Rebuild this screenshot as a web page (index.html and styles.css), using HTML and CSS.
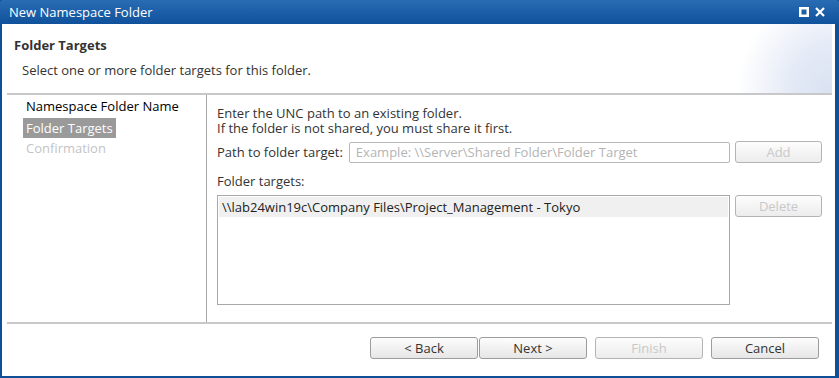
FILE: index.html
```html
<!DOCTYPE html>
<html lang="en">

<head>
    <meta charset="UTF-8">
    <title>New Namespace Folder</title>
    <link rel="stylesheet" href="styles.css">
</head>

<body>
    <div class="window">
        <div class="titlebar">
            <span class="title">New Namespace Folder</span>
            <div class="controls">
                <svg width="10" height="10" viewBox="0 0 10 10">
                    <rect x="1.25" y="1.25" width="7.5" height="7.5" fill="none" stroke="#fff" stroke-width="2.5" />
                </svg>
                <svg width="10" height="10" viewBox="0 0 10 10">
                    <path d="M1 1 L9 9 M9 1 L1 9" stroke="#fff" stroke-width="2.2" />
                </svg>
            </div>
        </div>

        <div class="dialog">
            <div class="header">
                <h1>Folder Targets</h1>
                <p>Select one or more folder targets for this folder.</p>
            </div>

            <div class="main">
                <ul class="steps">
                    <li>Namespace Folder Name</li>
                    <li class="current"><span>Folder Targets</span></li>
                    <li class="pending">Confirmation</li>
                </ul>

                <div class="content">
                    <p class="intro">Enter the UNC path to an existing folder.</p>
                    <p class="intro">If the folder is not shared, you must share it first.</p>

                    <div class="row first">
                        <label for="target">Path to folder target:</label>
                        <input id="target" type="text" placeholder="Example: \\Server\Shared Folder\Folder Target">
                        <button class="btn side" disabled>Add</button>
                    </div>

                    <div class="list-label">Folder targets:</div>
                    <div class="row top">
                        <div class="listbox">
                            <div class="item">\\lab24win19c\Company Files\Project_Management - Tokyo</div>
                        </div>
                        <button class="btn side" disabled>Delete</button>
                    </div>
                </div>
            </div>

            <div class="footer">
                <div class="pair">
                    <button class="btn wide">&lt; Back</button>
                    <button class="btn wide">Next &gt;</button>
                </div>
                <button class="btn wide" disabled>Finish</button>
                <button class="btn wide">Cancel</button>
            </div>
        </div>
    </div>
</body>

</html>
```

FILE: styles.css
```css
* {
    box-sizing: border-box;
}

body {
    margin: 0;
    font-family: 'Open Sans', 'Noto Sans', sans-serif;
    font-size: 13px;
    color: #333;
}

.window {
    width: 839px;
    height: 378px;
    display: flex;
    flex-direction: column;
    background: #0f4f97;
    padding: 0 4px 2px 2px;
}

.titlebar {
    height: 24px;
    flex: none;
    display: flex;
    align-items: center;
    justify-content: space-between;
    background: linear-gradient(#2a6cb4, #0f519b);
    color: #fff;
    margin: 0 -4px 0 -2px;
    padding: 0 14px 0 9px;
    border-radius: 3px 3px 0 0;
}

.title {
    font-size: 13px;
}

.controls {
    display: flex;
    gap: 6px;
}

.dialog {
    flex: 1;
    display: flex;
    flex-direction: column;
    background: #fff;
    padding: 0 3px 0 5px;
}

.header {
    height: 71px;
    padding: 12px 0 0 7px;
    background: radial-gradient(ellipse 95px 105px at 100% 100%, #d9e2f2 0%, #e4eaf6 45%, rgba(255, 255, 255, 0) 100%);
    border-bottom: 2px solid #c8c8c8;
}

.header h1 {
    margin: 0;
    font-size: 13px;
    line-height: 18px;
    font-weight: bold;
}

.header p {
    margin: 7px 0 0 8px;
    line-height: 18px;
}

.main {
    flex: 1;
    display: flex;
    border-bottom: 2px solid #c8c8c8;
}

.steps {
    width: 200px;
    flex: none;
    margin: 0;
    padding: 1px 0 0 16px;
    list-style: none;
    border-right: 1px solid #a8a8a8;
}

.steps li {
    height: 21px;
    line-height: 21px;
    padding-left: 3px;
    color: #000;
}

.steps li.current {
    padding-left: 0;
}

.steps li.current span {
    display: inline-block;
    height: 20px;
    line-height: 20px;
    margin-top: 1px;
    padding: 0 3px;
    background: #9a9a9a;
    color: #fff;
}

.steps li.pending {
    color: #c4c4c4;
}

.content {
    flex: 1;
    padding: 11px 10px 0 10px;
}

.intro {
    margin: 0;
    height: 15px;
    line-height: 15px;
}

.row {
    display: flex;
    align-items: center;
    gap: 5px;
}

.row.first {
    margin-top: 5px;
}

.row.top {
    align-items: flex-start;
}

.row label {
    margin-right: 1px;
}

input {
    flex: 1;
    height: 21px;
    border: 1px solid #b8b8b8;
    border-radius: 2px;
    padding: 0 6px;
    font: inherit;
    color: #333;
}

input::placeholder {
    color: #b4b4b4;
}

.list-label {
    margin: 10px 0 6px;
    line-height: 16px;
}

.listbox {
    flex: 1;
    height: 110px;
    border: 1px solid #a8a8a8;
    padding: 1px;
}

.item {
    height: 20px;
    line-height: 20px;
    padding-left: 3px;
    background: #f0f0f0;
    color: #222;
}

.btn {
    height: 22px;
    border: 1px solid #9c9c9c;
    border-radius: 3px;
    background: linear-gradient(#fdfdfd, #e6e6e6);
    font: inherit;
    color: #333;
    padding: 0;
}

.btn:disabled {
    color: #c8c8c8;
    border-color: #b4b4b4;
    background: linear-gradient(#fdfdfd, #ececec);
}

.btn.side {
    width: 87px;
    flex: none;
}

.btn.wide {
    width: 108px;
}

.footer {
    height: 52px;
    flex: none;
    display: flex;
    justify-content: flex-end;
    align-items: flex-start;
    gap: 8px;
    padding: 13px 13px 0 0;
}

.pair {
    display: flex;
    gap: 1px;
}
```
